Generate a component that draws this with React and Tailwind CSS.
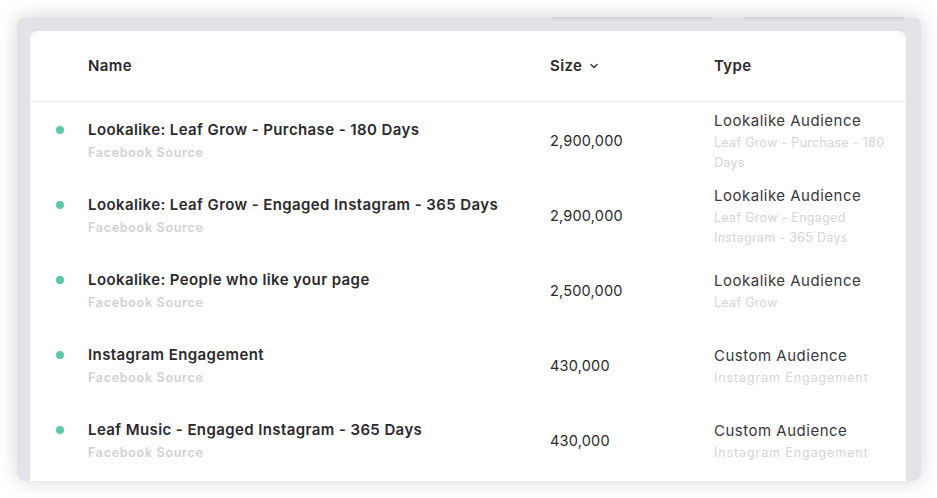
import React from "react";

const rows = [
  { name: "Lookalike: Leaf Grow - Purchase - 180 Days", size: "2,900,000", type: "Lookalike Audience", sub: ["Leaf Grow - Purchase - 180", "Days"] },
  { name: "Lookalike: Leaf Grow - Engaged Instagram - 365 Days", size: "2,900,000", type: "Lookalike Audience", sub: ["Leaf Grow - Engaged", "Instagram - 365 Days"] },
  { name: "Lookalike: People who like your page", size: "2,500,000", type: "Lookalike Audience", sub: ["Leaf Grow"] },
  { name: "Instagram Engagement", size: "430,000", type: "Custom Audience", sub: ["Instagram Engagement"] },
  { name: "Leaf Music - Engaged Instagram - 365 Days", size: "430,000", type: "Custom Audience", sub: ["Instagram Engagement"] },
];

export default function App() {
  return (
    <div className="w-[937px] h-[498px] bg-white overflow-hidden pt-[17px] pl-[17px]" style={{ fontFamily: "Inter, 'Noto Sans', sans-serif" }}>
      <div className="w-[904px] h-[464px] bg-[#e4e2e6] rounded-[8px] shadow-[0_0_20px_rgba(0,0,0,0.17)] flex flex-col pl-[13px] pr-[15px] overflow-hidden">
        <div className="h-[14px] flex justify-end gap-[32px] pr-[2px]">
          <div className="w-[160px] h-[4px] rounded-b-[6px] bg-gradient-to-b from-[rgba(0,0,0,0.07)] to-transparent" />
          <div className="w-[160px] h-[4px] rounded-b-[6px] bg-gradient-to-b from-[rgba(0,0,0,0.07)] to-transparent" />
        </div>
        <div className="flex-1 bg-white rounded-t-[8px] flex flex-col text-[#2c292d]">
          <div className="h-[71px] border-b border-[#e8e7e9] flex items-center text-[15px] font-semibold tracking-[0.4px]">
            <div className="w-[520px] pl-[58px]">Name</div>
            <div className="w-[164px] flex items-center gap-[8px]">
              <span>Size</span>
              <svg width="8" height="6" viewBox="0 0 8 6" fill="none">
                <path d="M1 1.5 L4 4.5 L7 1.5" stroke="#2c292d" strokeWidth="1.3" strokeLinecap="round" strokeLinejoin="round" />
              </svg>
            </div>
            <div className="flex-1">Type</div>
          </div>
          {rows.map((r, i) => (
            <div key={i} className="h-[75px] flex items-center pt-[3px]">
              <div className="w-[520px] flex items-start pl-[26px]">
                <div className="w-[8px] h-[8px] rounded-full bg-[#5bc8ac] mt-[7px] mr-[24px] shrink-0" />
                <div className="flex flex-col">
                  <div className="text-[15px] font-semibold leading-[22px] tracking-[0.4px]">{r.name}</div>
                  <div className="text-[12.5px] font-semibold leading-[23px] text-[#d3d0d4] tracking-[0.7px]">Facebook Source</div>
                </div>
              </div>
              <div className="w-[164px] text-[14.5px] tracking-[0.2px] text-[#2c292d]">{r.size}</div>
              <div className="flex-1 flex flex-col">
                <div className="text-[15px] leading-[22px] tracking-[0.5px] text-[#3a373b]">{r.type}</div>
                {r.sub.map((s, j) => (
                  <div key={j} className={`text-[12.5px] leading-[20px] text-[#d6d4d7] ${j === 0 ? "mt-[1px]" : ""} ${s.length > 18 && !s.includes("-") ? "tracking-[0.9px]" : "tracking-[0.3px]"}`}>{s}</div>
                ))}
              </div>
            </div>
          ))}
        </div>
      </div>
    </div>
  );
}
